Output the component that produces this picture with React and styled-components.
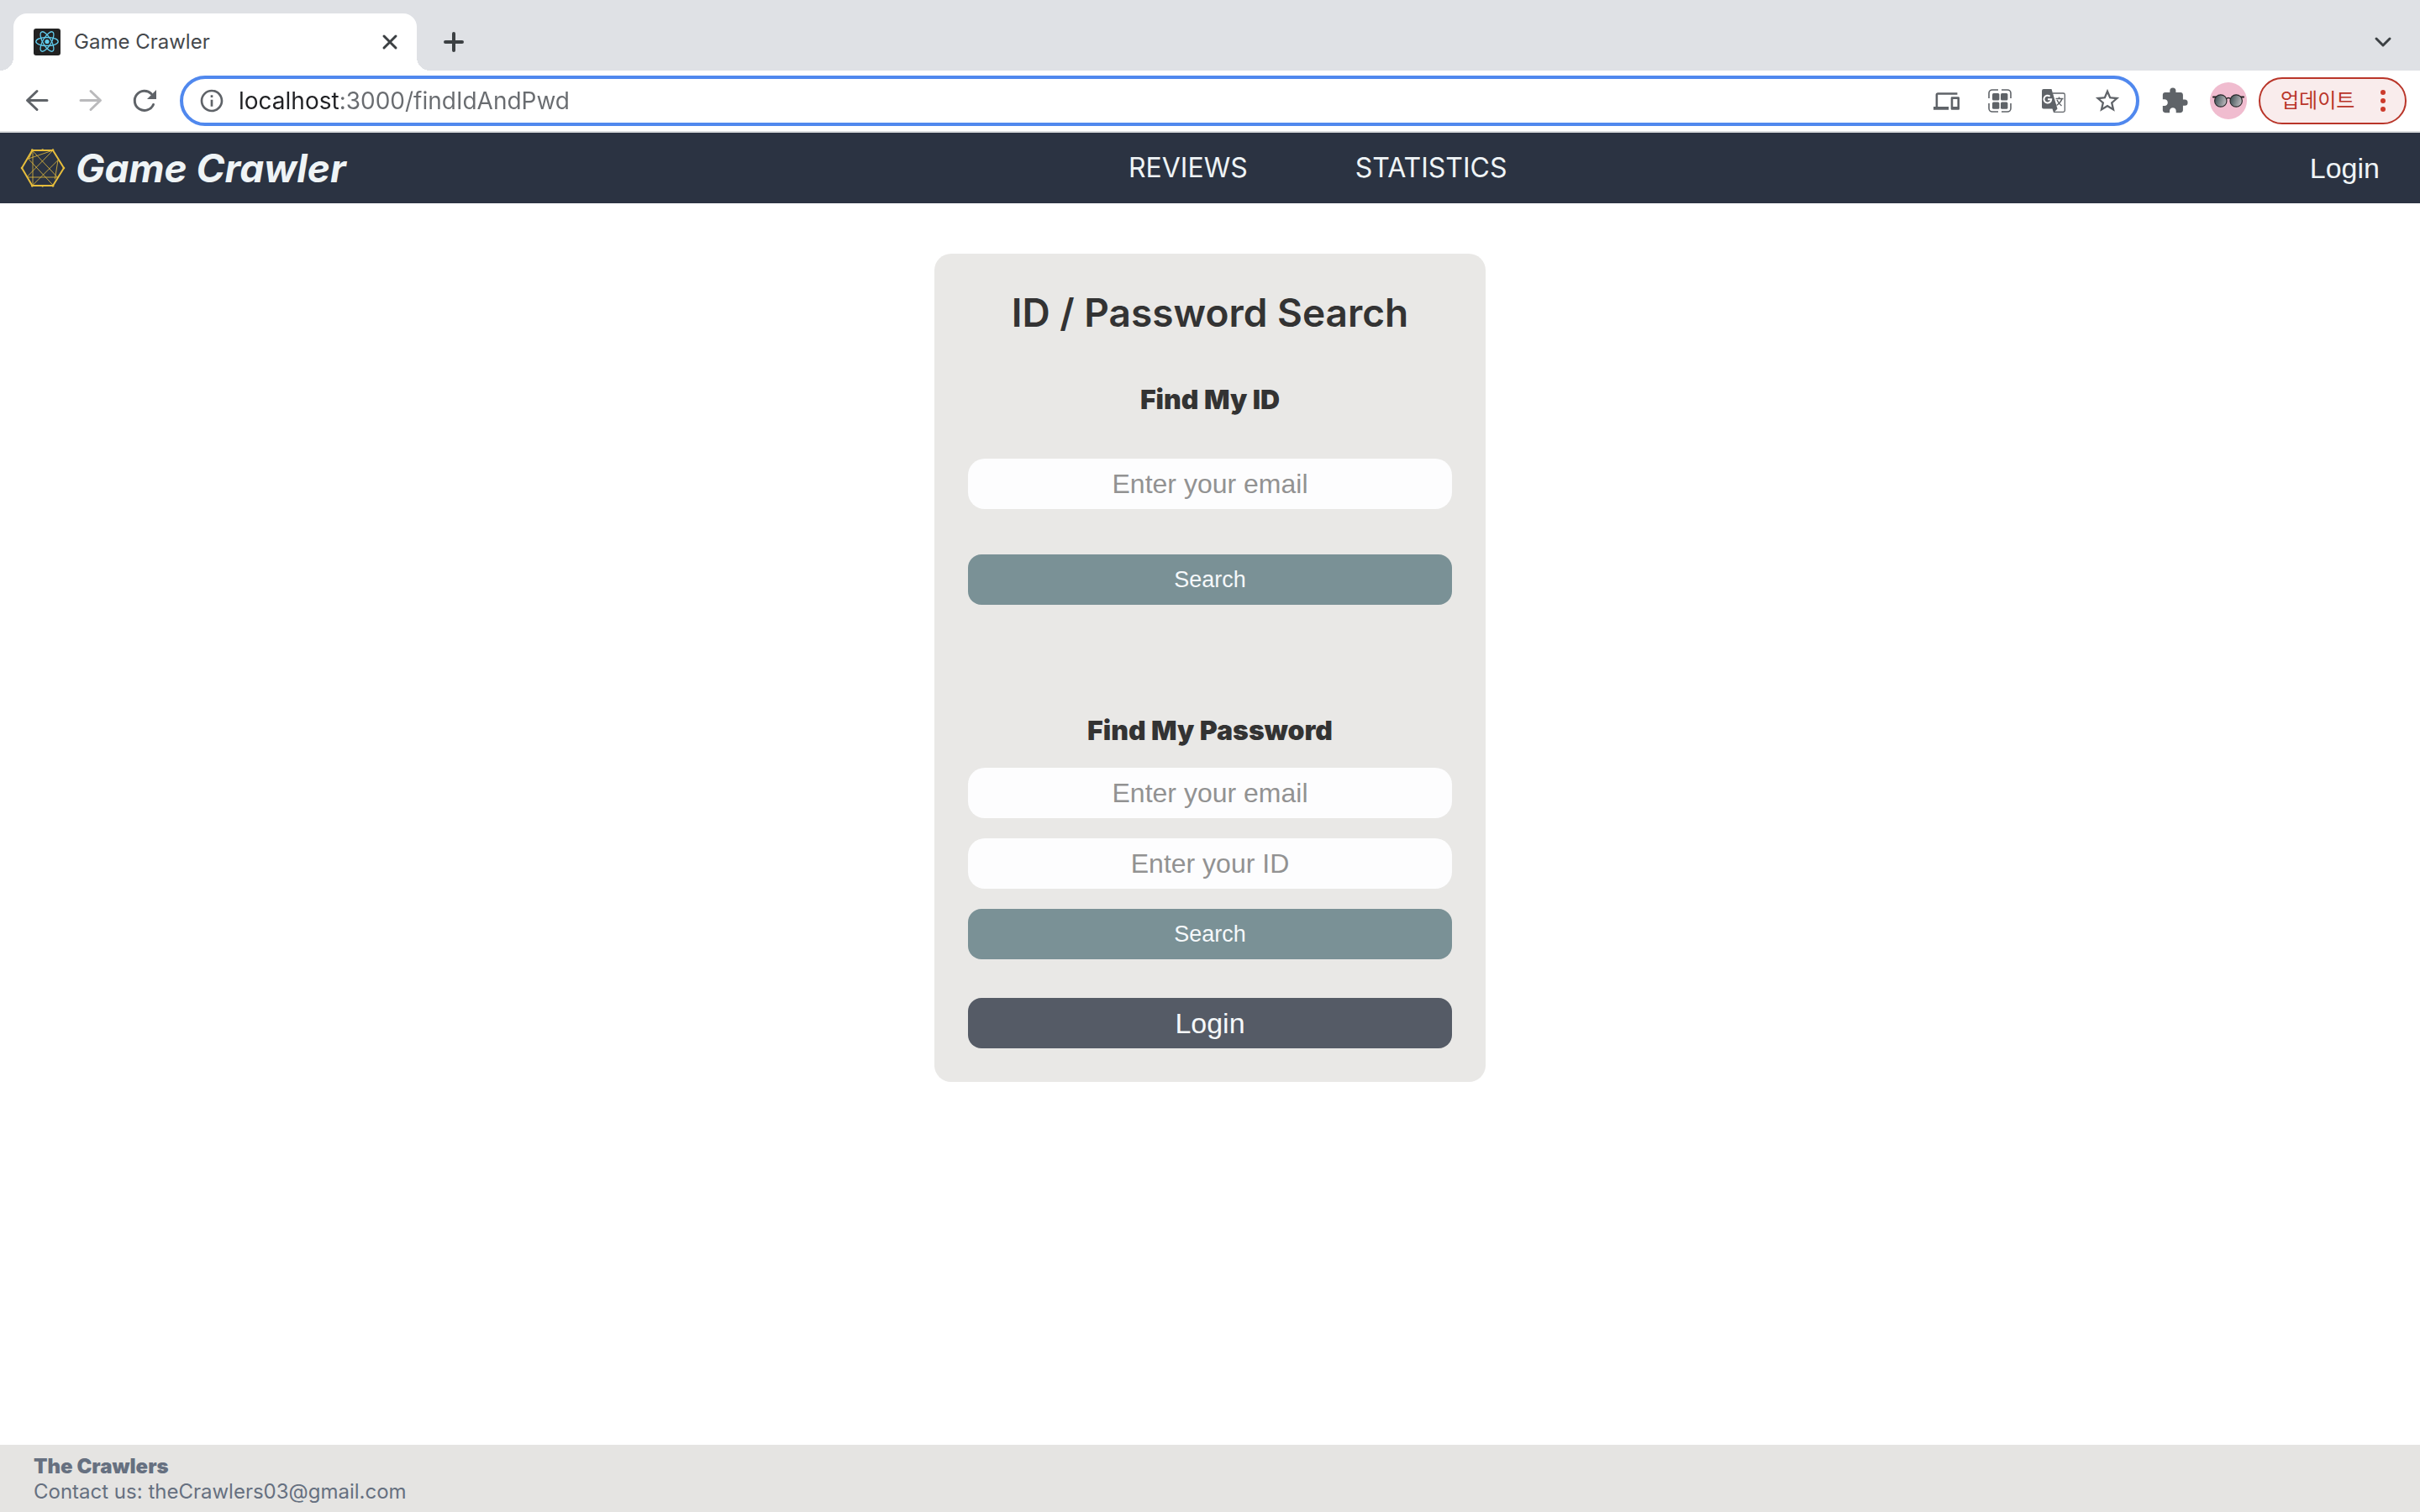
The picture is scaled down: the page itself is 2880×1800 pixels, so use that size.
import React, { useState } from 'react';
import styled, { createGlobalStyle } from 'styled-components';
import { MdInfoOutline, MdDevices, MdStarBorder, MdExtension } from 'react-icons/md';

const GlobalStyle = createGlobalStyle`
  *, *::before, *::after { box-sizing: border-box; }
  body {
    margin: 0;
    background: #ffffff;
    font-family: Inter, "Noto Sans CJK KR", sans-serif;
  }
  button, input { font-family: inherit; margin: 0; }
  h1, h2, p { margin: 0; }
`;

const Window = styled.div`
  display: flex;
  flex-direction: column;
  min-height: 100vh;
`;

/* ---------- Browser chrome ---------- */

const TabStrip = styled.div`
  display: flex;
  align-items: flex-end;
  height: 84px;
  padding: 0 24px 0 16px;
  background: #dfe1e5;
`;

const Tab = styled.div`
  position: relative;
  display: flex;
  align-items: center;
  width: 480px;
  height: 68px;
  padding: 0 12px 0 24px;
  border-radius: 16px 16px 0 0;
  background: #ffffff;

  &::before,
  &::after {
    content: '';
    position: absolute;
    bottom: 0;
    width: 16px;
    height: 16px;
  }
  &::before {
    right: 100%;
    background: radial-gradient(circle at 0 0, transparent 16px, #ffffff 16px);
  }
  &::after {
    left: 100%;
    background: radial-gradient(circle at 100% 0, transparent 16px, #ffffff 16px);
  }
`;

const TabTitle = styled.span`
  flex: 1;
  margin-left: 16px;
  font-size: 24px;
  line-height: 32px;
  color: #45484c;
`;

const IconButton = styled.button`
  display: flex;
  flex: none;
  align-items: center;
  justify-content: center;
  width: 40px;
  height: 40px;
  padding: 0;
  border: 0;
  background: none;
  color: ${({ $color }) => $color || '#5f6368'};
`;

const NewTab = styled(IconButton)`
  margin: 0 auto 14px 24px;
`;

const TabSearch = styled(IconButton)`
  margin-bottom: 14px;
`;

const Toolbar = styled.div`
  display: flex;
  align-items: center;
  height: 74px;
  padding: 0 16px 0 24px;
  border-bottom: 2px solid #dadcde;
  background: #ffffff;
`;

const HistoryButtons = styled.div`
  display: flex;
  gap: 24px;
  margin-right: 22px;
`;

const AddressBar = styled.div`
  display: flex;
  flex: 1;
  align-items: center;
  height: 60px;
  padding: 0 14px;
  border: 4px solid #5088ee;
  border-radius: 30px;
`;

const AddressInput = styled.input`
  flex: 1;
  min-width: 0;
  height: 40px;
  margin: 0 12px;
  padding: 0;
  border: 0;
  outline: 0;
  font-size: 28px;
  background: linear-gradient(90deg, #202124 120px, #696c70 120px);
  background-clip: text;
  -webkit-background-clip: text;
  color: transparent;
  caret-color: #202124;
`;

const PageActions = styled.div`
  display: flex;
  gap: 24px;
`;

const Extensions = styled(IconButton)`
  margin: 0 22px;
`;

const Avatar = styled.button`
  flex: none;
  width: 44px;
  height: 44px;
  margin-right: 14px;
  padding: 0;
  border: 0;
  border-radius: 50%;
  overflow: hidden;
  background: #f0bccf;
  svg { display: block; }
`;

const UpdateButton = styled.button`
  display: flex;
  flex: none;
  align-items: center;
  justify-content: space-between;
  width: 176px;
  height: 56px;
  padding: 0 23px 0 24px;
  border: 2px solid #b93529;
  border-radius: 28px;
  background: #f9ecec;
  color: #b93529;
  font-size: 24px;
  line-height: 32px;
`;

/* ---------- Site ---------- */

const SiteHeader = styled.header`
  display: flex;
  align-items: center;
  justify-content: space-between;
  height: 84px;
  padding: 0 48px 0 24px;
  background: #2b3342;
  color: #eff4f6;
`;

const Brand = styled.a`
  display: flex;
  align-items: center;
  gap: 12px;
  color: inherit;
  font-size: 46px;
  font-style: italic;
  font-weight: 700;
  line-height: 60px;
  text-decoration: none;
`;

const SiteNav = styled.nav`
  display: flex;
  gap: 128px;
`;

const NavLink = styled.a`
  color: inherit;
  font-size: 32px;
  line-height: 40px;
  text-decoration: none;
`;

const HeaderLogin = styled.button`
  padding: 0 0 0 24px;
  border: 0;
  background: none;
  color: inherit;
  font-family: "Liberation Sans", Arial, sans-serif;
  font-size: 34px;
  line-height: 40px;
`;

const Main = styled.main`
  display: flex;
  flex: 1;
  align-items: flex-start;
  justify-content: center;
  padding: 60px 24px;
`;

const Card = styled.section`
  display: flex;
  flex-direction: column;
  width: 656px;
  max-width: 100%;
  padding: 40px;
  border-radius: 20px;
  background: #e9e8e6;
  color: #333333;
`;

const CardTitle = styled.h1`
  font-size: 46px;
  font-weight: 600;
  line-height: 60px;
  text-align: center;
`;

const Form = styled.form`
  margin-top: ${({ $top }) => $top}px;
`;

const FormTitle = styled.h2`
  margin-bottom: ${({ $below }) => $below}px;
  font-size: 32px;
  font-weight: 900;
  line-height: 40px;
  text-align: center;
`;

const Fields = styled.div`
  display: flex;
  flex-direction: column;
  gap: ${({ $gap }) => $gap}px;
`;

const Field = styled.input`
  width: 100%;
  height: 60px;
  padding: 0 20px;
  border: 0;
  border-radius: 20px;
  background: #fdfdfe;
  color: #333333;
  font-family: "Liberation Sans", Arial, sans-serif;
  font-size: 32px;
  text-align: center;
  &::placeholder { color: #929292; opacity: 1; }
`;

const Submit = styled.button`
  width: 100%;
  height: 60px;
  padding: 0;
  border: 0;
  border-radius: 16px;
  background: ${({ $dark }) => ($dark ? '#555b66' : '#7a9196')};
  color: #f5f8fa;
  font-family: "Liberation Sans", Arial, sans-serif;
  font-size: ${({ $dark }) => ($dark ? 34 : 27)}px;
`;

const LoginSubmit = styled(Submit)`
  margin-top: 46px;
`;

const SiteFooter = styled.footer`
  display: flex;
  flex-direction: column;
  height: 80px;
  padding: 11px 40px;
  background: #e5e4e2;
  color: #667080;
  font-size: 24px;
  line-height: 30px;
`;

const TeamName = styled.strong`
  font-weight: 900;
`;

/* ---------- Drawings ---------- */

const ReactFavicon = () => (
  <svg width="32" height="32" viewBox="0 0 32 32" aria-hidden="true">
    <rect width="32" height="32" rx="3" fill="#222222" />
    <g fill="none" stroke="#61cdee" strokeWidth="1.3">
      <ellipse cx="16" cy="15.5" rx="13.2" ry="5" />
      <ellipse cx="16" cy="15.5" rx="13.2" ry="5" transform="rotate(60 16 15.5)" />
      <ellipse cx="16" cy="15.5" rx="13.2" ry="5" transform="rotate(120 16 15.5)" />
    </g>
    <circle cx="16" cy="15.5" r="2.6" fill="#61cdee" />
  </svg>
);

const Stroke = ({ d, size, width = 3 }) => (
  <svg
    width={size}
    height={size}
    viewBox={`0 0 ${size} ${size}`}
    fill="none"
    stroke="currentColor"
    strokeWidth={width}
    strokeLinecap="round"
    strokeLinejoin="round"
    aria-hidden="true"
  >
    <path d={d} />
  </svg>
);

const ReloadIcon = () => (
  <svg width="40" height="40" viewBox="0 0 40 40" aria-hidden="true">
    <path
      d="M30.5 24.5A11.6 11.6 0 1 1 28.2 11.8"
      fill="none"
      stroke="currentColor"
      strokeWidth="3"
      strokeLinecap="round"
    />
    <path d="M34 7V18H23Z" fill="currentColor" />
  </svg>
);

const TranslateIcon = () => (
  <svg width="28" height="28" viewBox="0 0 28 28" fill="none" aria-hidden="true">
    <path d="M13 5H25.5A1.8 1.8 0 0 1 27.3 6.8V25.5A1.8 1.8 0 0 1 25.5 27.3H14" stroke="currentColor" strokeWidth="1.3" />
    <path d="M16.5 11.5H25.5M20.5 9.5V11.5M24 11.5Q22.5 16 17.5 19.5M18 13Q20 17.5 23.5 20" stroke="currentColor" strokeWidth="1.5" />
    <path d="M2 0H11.5L18.5 23.5 14 28 12.5 23.5H2A2 2 0 0 1 0 21.5V2A2 2 0 0 1 2 0Z" fill="currentColor" />
    <path d="M9.6 8.7A4.4 4.4 0 1 0 11.2 12.2H7" stroke="#ffffff" strokeWidth="2" />
  </svg>
);

const QrIcon = () => (
  <svg width="30" height="30" viewBox="0 0 30 30" fill="none" aria-hidden="true">
    <path
      d="M2 12V6a4 4 0 0 1 4-4h7M17 2h7a4 4 0 0 1 4 4v6M28 18v6a4 4 0 0 1-4 4h-7M13 28H6a4 4 0 0 1-4-4v-6"
      stroke="currentColor"
      strokeWidth="1.6"
    />
    <g fill="currentColor">
      <rect x="6" y="6" width="8.4" height="8.4" rx="1.5" />
      <rect x="16" y="6" width="8.4" height="8.4" rx="1.5" />
      <rect x="6" y="16.4" width="8.4" height="8.4" rx="1.5" />
      <rect x="16" y="16.4" width="8.4" height="8.4" rx="1.5" />
    </g>
  </svg>
);

const Sunglasses = () => (
  <svg width="44" height="44" viewBox="0 0 44 44" aria-hidden="true">
    <defs>
      <linearGradient id="lens" x1="0" y1="0" x2="1" y2="0.3">
        <stop offset="0" stopColor="#34474b" />
        <stop offset="1" stopColor="#b5b4b8" />
      </linearGradient>
    </defs>
    <path d="M4 17.5h5M40 17.5h-5" stroke="#222" strokeWidth="2.2" strokeLinecap="round" />
    <path d="M19 20q3-3 6 0" stroke="#222" strokeWidth="1.4" fill="none" />
    <circle cx="12.8" cy="22" r="7.2" fill="url(#lens)" stroke="#2a2a2d" strokeWidth="1.2" />
    <circle cx="31.2" cy="22" r="7.2" fill="url(#lens)" stroke="#2a2a2d" strokeWidth="1.2" />
  </svg>
);

const MoreDots = () => (
  <svg width="6" height="28" viewBox="0 0 6 28" fill="#cc3b2c" aria-hidden="true">
    <circle cx="3" cy="4" r="3" />
    <circle cx="3" cy="14" r="3" />
    <circle cx="3" cy="24" r="3" />
  </svg>
);

const HexLogo = () => (
  <svg width="54" height="48" viewBox="73 48 162 144" fill="none" stroke="#e6bd3c" aria-hidden="true">
    <path d="M79 120 116 57H190L229 120 190 183H116Z" strokeWidth="6" strokeLinejoin="round" />
    <g strokeWidth="3" opacity="0.8">
      <path d="M118 57V183M116 57 207 154M190 57 97 152M190 57 102 87M102 87 192 183M97 153H207M208 92 116 183M208 92 197 160M116 60 104 88" />
    </g>
    <g fill="#e6bd3c" stroke="none">
      <circle cx="79" cy="120" r="4" />
      <circle cx="229" cy="120" r="4" />
      <circle cx="116" cy="56" r="4" />
      <circle cx="153" cy="56" r="4" />
      <circle cx="190" cy="56" r="4" />
      <circle cx="116" cy="184" r="4" />
      <circle cx="153" cy="184" r="4" />
      <circle cx="190" cy="184" r="4" />
    </g>
  </svg>
);

/* ---------- Page ---------- */

const stop = (event) => event.preventDefault();

function BrowserChrome() {
  const [address, setAddress] = useState('localhost:3000/findIdAndPwd');
  return (
    <>
      <TabStrip>
        <Tab>
          <ReactFavicon />
          <TabTitle>Game Crawler</TabTitle>
          <IconButton aria-label="Close tab" $color="#3c4043">
            <Stroke size={20} d="M3 3 17 17M17 3 3 17" />
          </IconButton>
        </Tab>
        <NewTab aria-label="New tab" $color="#3c4043">
          <Stroke size={28} width={4} d="M14 4V24M4 14H24" />
        </NewTab>
        <TabSearch aria-label="Search tabs" $color="#3c4043">
          <Stroke size={24} d="M4 8 12 16 20 8" />
        </TabSearch>
      </TabStrip>
      <Toolbar>
        <HistoryButtons>
          <IconButton aria-label="Back">
            <Stroke size={40} d="M32 19.5H9M20 8.5 8.5 19.5 20 30.5" />
          </IconButton>
          <IconButton aria-label="Forward" $color="#bababc">
            <Stroke size={40} d="M8 19.5H31M20 8.5 31.5 19.5 20 30.5" />
          </IconButton>
          <IconButton aria-label="Reload"><ReloadIcon /></IconButton>
        </HistoryButtons>
        <AddressBar>
          <IconButton aria-label="Site information"><MdInfoOutline size={32} /></IconButton>
          <AddressInput
            aria-label="Address"
            value={address}
            onChange={(event) => setAddress(event.target.value)}
          />
          <PageActions>
            <IconButton aria-label="Send to devices"><MdDevices size={31} /></IconButton>
            <IconButton aria-label="Create QR code"><QrIcon /></IconButton>
            <IconButton aria-label="Translate page"><TranslateIcon /></IconButton>
            <IconButton aria-label="Bookmark page"><MdStarBorder size={34} /></IconButton>
          </PageActions>
        </AddressBar>
        <Extensions aria-label="Extensions"><MdExtension size={34} /></Extensions>
        <Avatar aria-label="Profile"><Sunglasses /></Avatar>
        <UpdateButton>
          업데이트
          <MoreDots />
        </UpdateButton>
      </Toolbar>
    </>
  );
}

export default function App() {
  return (
    <Window>
      <GlobalStyle />
      <BrowserChrome />
      <SiteHeader>
        <Brand href="#home">
          <HexLogo />
          Game Crawler
        </Brand>
        <SiteNav>
          <NavLink href="#reviews">REVIEWS</NavLink>
          <NavLink href="#statistics">STATISTICS</NavLink>
        </SiteNav>
        <HeaderLogin>Login</HeaderLogin>
      </SiteHeader>
      <Main>
        <Card>
          <CardTitle>ID / Password Search</CardTitle>
          <Form $top={54} onSubmit={stop}>
            <FormTitle $below={50}>Find My ID</FormTitle>
            <Fields $gap={54}>
              <Field type="email" aria-label="Email for ID search" placeholder="Enter your email" />
              <Submit>Search</Submit>
            </Fields>
          </Form>
          <Form $top={130} onSubmit={stop}>
            <FormTitle $below={24}>Find My Password</FormTitle>
            <Fields $gap={24}>
              <Field type="email" aria-label="Email for password search" placeholder="Enter your email" />
              <Field type="text" aria-label="ID for password search" placeholder="Enter your ID" />
              <Submit>Search</Submit>
            </Fields>
          </Form>
          <LoginSubmit type="button" $dark>Login</LoginSubmit>
        </Card>
      </Main>
      <SiteFooter>
        <TeamName>The Crawlers</TeamName>
        <p>Contact us: theCrawlers03@gmail.com</p>
      </SiteFooter>
    </Window>
  );
}
